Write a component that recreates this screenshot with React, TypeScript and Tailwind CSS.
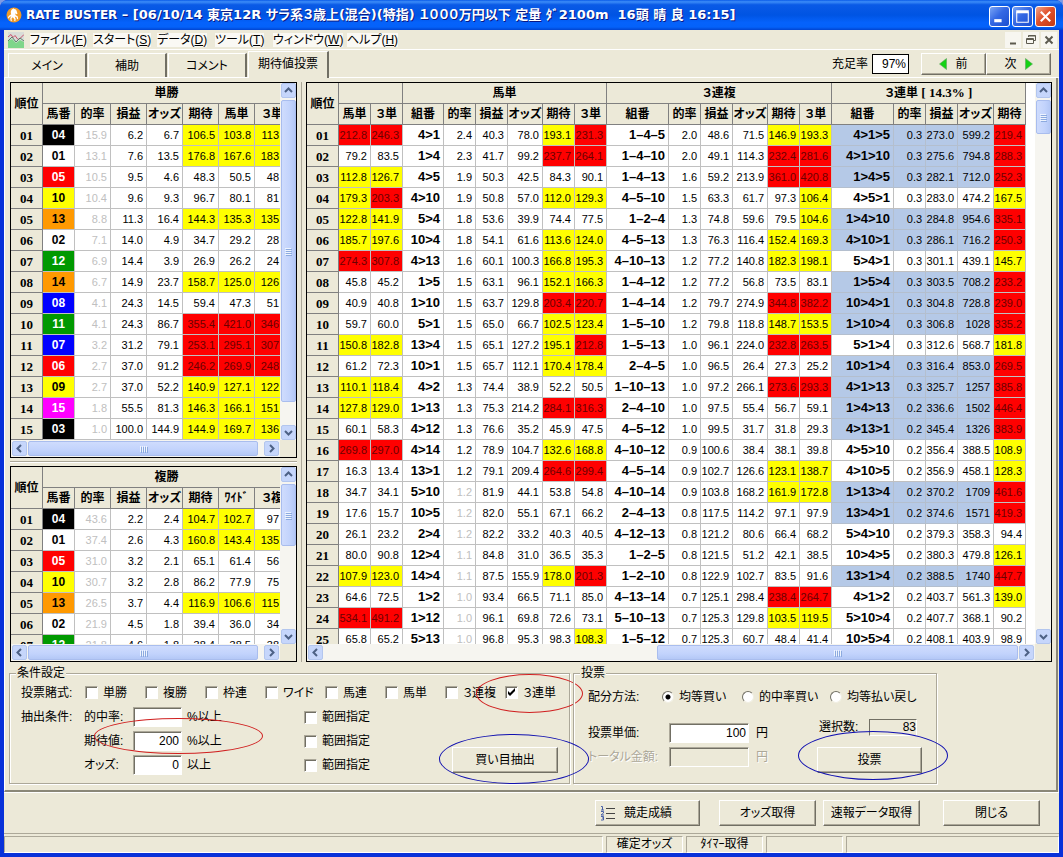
import clsx from 'clsx';
import type { ReactNode } from 'react';

const raised =
  'border border-t-white border-l-white border-b-[#716f64] border-r-[#716f64] bg-[#ece9d8] shadow-[inset_-1px_-1px_0_#aca899]';
const sunken =
  'border border-t-[#aca899] border-l-[#aca899] border-b-white border-r-white shadow-[inset_1px_1px_0_#716f64]';

const menus = [
  { label: 'ファイル', hotkey: 'F', width: 'w-[63px]' },
  { label: 'スタート', hotkey: 'S', width: 'w-[64px]' },
  { label: 'データ', hotkey: 'D', width: 'w-[58px]' },
  { label: 'ツール', hotkey: 'T', width: 'w-[58px]' },
  { label: 'ウィンドウ', hotkey: 'W', width: 'w-[74px]' },
  { label: 'ヘルプ', hotkey: 'H', width: 'w-[58px]' },
];

const betTypes = ['単勝', '複勝', '枠連', 'ワイド', '馬連', '馬単', '３連複', '３連単'];

const horseColors: Record<string, string> = {
  '03': 'bg-black text-white',
  '04': 'bg-black text-white',
  '05': 'bg-[#ff0000] text-white',
  '06': 'bg-[#ff0000] text-white',
  '07': 'bg-[#0000ff] text-white',
  '08': 'bg-[#0000ff] text-white',
  '09': 'bg-[#ffff00] text-black',
  '10': 'bg-[#ffff00] text-black',
  '11': 'bg-[#009900] text-white',
  '12': 'bg-[#009900] text-white',
  '13': 'bg-[#ff9900] text-black',
  '14': 'bg-[#ff9900] text-black',
  '15': 'bg-[#ff00ff] text-white',
};

const toRows = (text: string) =>
  text
    .trim()
    .split('\n')
    .map((line) => line.trim().split(/\s+/));

const winRows = toRows(`
  04 15.9 6.2 6.7 106.5 103.8 113
  01 13.1 7.6 13.5 176.8 167.6 183
  05 10.5 9.5 4.6 48.3 50.5 48
  10 10.4 9.6 9.3 96.7 80.1 81
  13 8.8 11.3 16.4 144.3 135.3 135
  02 7.1 14.0 4.9 34.7 29.2 28
  12 6.9 14.4 3.9 26.9 26.2 24
  14 6.7 14.9 23.7 158.7 125.0 126
  08 4.1 24.3 14.5 59.4 47.3 51
  11 4.1 24.3 86.7 355.4 421.0 346
  07 3.2 31.2 79.1 253.1 295.1 307
  06 2.7 37.0 91.2 246.2 269.9 248
  09 2.7 37.0 52.2 140.9 127.1 122
  15 1.8 55.5 81.3 146.3 166.1 151
  03 1.0 100.0 144.9 144.9 169.7 136
`);

const placeRows = toRows(`
  04 43.6 2.2 2.4 104.7 102.7 97
  01 37.4 2.6 4.3 160.8 143.4 135
  05 31.0 3.2 2.1 65.1 61.4 56
  10 30.7 3.2 2.8 86.2 77.9 75
  13 26.5 3.7 4.4 116.9 106.6 115
  02 21.9 4.5 1.8 39.4 36.0 34
  12 21.8 4.6 1.8 38.4 38.5 38
`);

// 馬単 3単 | 馬単: 組番 的率 損益 オッズ 期待 3単 | 3連複: 同 | 3連単: 組番 的率 損益 オッズ 期待
const comboRows = toRows(`
  212.8 246.3 4>1 2.4 40.3 78.0 193.1 231.3 1–4–5 2.0 48.6 71.5 146.9 193.3 4>1>5 0.3 273.0 599.2 219.4
  79.2 83.5 1>4 2.3 41.7 99.2 237.7 264.1 1–4–10 2.0 49.1 114.3 232.4 281.6 4>1>10 0.3 275.6 794.8 288.3
  112.8 126.7 4>5 1.9 50.3 42.5 84.3 90.1 1–4–13 1.6 59.2 213.9 361.0 420.8 1>4>5 0.3 282.1 712.0 252.3
  179.3 203.3 4>10 1.9 50.8 57.0 112.0 129.3 4–5–10 1.5 63.3 61.7 97.3 106.4 4>5>1 0.3 283.0 474.2 167.5
  122.8 141.9 5>4 1.8 53.6 39.9 74.4 77.5 1–2–4 1.3 74.8 59.6 79.5 104.6 1>4>10 0.3 284.8 954.6 335.1
  185.7 197.6 10>4 1.8 54.1 61.6 113.6 124.0 4–5–13 1.3 76.3 116.4 152.4 169.3 4>10>1 0.3 286.1 716.2 250.3
  274.3 307.8 4>13 1.6 60.1 100.3 166.8 195.3 4–10–13 1.2 77.2 140.8 182.3 198.1 5>4>1 0.3 301.1 439.1 145.7
  45.8 45.2 1>5 1.5 63.1 96.1 152.1 166.3 1–4–12 1.2 77.2 56.8 73.5 83.1 1>5>4 0.3 303.5 708.2 233.2
  40.9 40.8 1>10 1.5 63.7 129.8 203.4 220.7 1–4–14 1.2 79.7 274.9 344.8 382.2 10>4>1 0.3 304.8 728.8 239.0
  59.7 60.0 5>1 1.5 65.0 66.7 102.5 123.4 1–5–10 1.2 79.8 118.8 148.7 153.5 1>10>4 0.3 306.8 1028 335.2
  150.8 182.8 13>4 1.5 65.1 127.2 195.1 212.8 1–5–13 1.0 96.1 224.0 232.8 263.5 5>1>4 0.3 312.6 568.7 181.8
  61.2 72.3 10>1 1.5 65.7 112.1 170.4 178.4 2–4–5 1.0 96.5 26.4 27.3 25.2 10>1>4 0.3 316.4 853.0 269.5
  110.1 118.4 4>2 1.3 74.4 38.9 52.2 50.5 1–10–13 1.0 97.2 266.1 273.6 293.3 4>1>13 0.3 325.7 1257 385.8
  127.8 129.0 1>13 1.3 75.3 214.2 284.1 316.3 2–4–10 1.0 97.5 55.4 56.7 59.1 1>4>13 0.2 336.6 1502 446.4
  60.1 58.3 4>12 1.3 76.6 35.2 45.9 47.5 4–5–12 1.0 99.5 31.7 31.8 29.3 4>13>1 0.2 345.4 1326 383.9
  269.8 297.0 4>14 1.2 78.9 104.7 132.6 168.8 4–10–12 0.9 100.6 38.4 38.1 39.8 4>5>10 0.2 356.4 388.5 108.9
  16.3 13.4 13>1 1.2 79.1 209.4 264.6 299.4 4–5–14 0.9 102.7 126.6 123.1 138.7 4>10>5 0.2 356.9 458.1 128.3
  34.7 34.1 5>10 1.2 81.9 44.1 53.8 54.8 4–10–14 0.9 103.8 168.2 161.9 172.8 1>13>4 0.2 370.2 1709 461.6
  17.6 15.7 10>5 1.2 82.0 55.1 67.1 66.2 2–4–13 0.8 117.5 114.2 97.1 97.9 13>4>1 0.2 374.6 1571 419.3
  26.1 23.2 2>4 1.2 82.2 33.2 40.3 40.5 4–12–13 0.8 121.2 80.6 66.4 68.2 5>4>10 0.2 379.3 358.3 94.4
  80.0 90.8 12>4 1.1 84.8 31.0 36.5 35.3 1–2–5 0.8 121.5 51.2 42.1 38.5 10>4>5 0.2 380.3 479.8 126.1
  107.9 123.0 14>4 1.1 87.5 155.9 178.0 201.3 1–2–10 0.8 122.9 102.7 83.5 91.6 13>1>4 0.2 388.5 1740 447.7
  64.6 72.5 1>2 1.0 93.4 66.5 71.1 85.0 4–13–14 0.7 125.1 298.4 238.4 264.7 4>1>2 0.2 403.7 561.3 139.0
  534.1 491.2 1>12 1.0 96.1 69.8 72.6 73.1 5–10–13 0.7 125.3 129.8 103.5 119.5 5>10>4 0.2 407.7 368.1 90.2
  65.8 65.2 5>13 1.0 96.8 95.3 98.3 108.3 1–5–12 0.7 125.3 60.7 48.4 41.4 10>5>4 0.2 408.1 403.9 98.9
`);

const comboHeads = [
  '馬単', '３単',
  '組番', '的率', '損益', 'オッズ', '期待', '３単',
  '組番', '的率', '損益', 'オッズ', '期待', '３単',
  '組番', '的率', '損益', 'オッズ', '期待',
];
const comboWidths = [32, 32, 32, 41, 32, 32, 35, 32, 32, 62, 32, 32, 35, 32, 32, 62, 32, 32, 36, 32];
const pairColumns = [2, 8, 14];
const expectColumns = [0, 1, 6, 7, 12, 13, 18];

const rank = (index: number) => String(index + 1).padStart(2, '0');

function heat(value: string) {
  const n = Number(value);
  if (n >= 200) return 'bg-[#ff0000] text-[#6b0000]';
  if (n >= 100) return 'bg-[#ffff00]';
  return 'bg-white';
}

export default function App() {
  return (
    <div className="bg-[#7f9be4] font-['Liberation_Sans','Noto_Sans_CJK_JP',sans-serif] text-xs text-black [font-feature-settings:'palt']">
      <div className="flex min-h-screen flex-col overflow-hidden rounded-t-lg bg-[#0831d9]">
        <TitleBar />
        <div className="mx-1 mb-1 flex flex-1 flex-col bg-[#ece9d8]">
          <MenuBar />
          <TabBar />
          <main className="mr-px border-r-2 border-b-2 border-l border-r-[#8a8778] border-b-[#8a8778] border-l-white pb-1.5">
            <div className="flex pt-1 pr-1 pl-[5px]">
              <div className="w-[287px] shrink-0">
                <HorseTable title="単勝" heads={['期待', '馬単', '３単']} rows={winRows} viewport="h-[357px]" thumb="flex-1 mb-[21px]" />
                <div className="my-[3px] h-0.5 border-t border-t-[#aca899] border-b border-b-white" />
                <HorseTable title="複勝" heads={['期待', 'ﾜｲﾄﾞ', '３複']} rows={placeRows} viewport="h-[177px]" thumb="h-[62px]" />
              </div>
              <div className="mx-1 w-px border-l border-l-[#aca899] bg-white" />
              <ComboTable />
            </div>
            <div className="mt-1 flex gap-[3px] pl-1">
              <Conditions />
              <Voting />
            </div>
          </main>
          <ActionBar />
          <StatusBar />
        </div>
      </div>
    </div>
  );
}

function TitleBar() {
  return (
    <header className="flex h-[30px] items-center bg-[linear-gradient(180deg,#0a5be8_0%,#3c8cf8_6%,#0a5ae6_16%,#0054e3_50%,#0562fb_75%,#0462fa_90%,#0144d0_100%)] pr-[7px] pl-1.5">
      <svg className="h-4 w-4" viewBox="0 0 16 16">
        <circle cx="8" cy="8" r="7.5" fill="#f09a26" />
        <path
          d="M6.500 2l1-.8.6.8c1.600.2 2.600 1.200 2.800 2.800l.6 2-1 .5-1.200-1 .2 1.700 2.300 1.500.3 2.500-1 .2-.6-1.900-1.700-.8.9 2.500-.4 2.200-1-.2.1-1.800-1.600-2-1.300 1.300.3 2.500-1 .2-.6-3 1.200-2-1.900.8-.7 1.500-.9-.4.8-2.200 2.500-1.600c-.8-2-.6-4 1.300-5.300z"
          fill="#fff"
        />
      </svg>
      <h1 className="ml-1 flex-1 truncate font-['DejaVu_Sans','Noto_Sans_CJK_JP',sans-serif] text-[13px] leading-5 font-bold whitespace-pre text-white [text-shadow:1px_1px_0_#0a1883]">
        <span className="text-xs">RATE BUSTER</span>
        {' – [06/10/14 東京12R サラ系３歳上(混合)(特指) １０００万円以下 定量 ﾀﾞ2100m  16頭 晴 良 16:15]'}
      </h1>
      <div className="flex gap-0.5 pt-0.5">
        <WindowButton label="最小化">
          <path d="M5 14h7" stroke="#fff" strokeWidth="3" />
        </WindowButton>
        <WindowButton label="最大化">
          <path d="M4.500 6v9.500h11V6" fill="none" stroke="#fff" />
          <path d="M4 5.500h12" stroke="#fff" strokeWidth="3" />
        </WindowButton>
        <WindowButton label="閉じる" danger>
          <path d="M5.500 5.500l9 9M14.500 5.500l-9 9" stroke="#fff" strokeWidth="2" />
        </WindowButton>
      </div>
    </header>
  );
}

function WindowButton({ label, danger, children }: { label: string; danger?: boolean; children: ReactNode }) {
  return (
    <button
      aria-label={label}
      className={clsx(
        'h-[21px] w-[21px] rounded-[3px] border border-white',
        danger
          ? 'bg-[linear-gradient(135deg,#f0a58c,#e0512b_45%,#c23a12)]'
          : 'bg-[linear-gradient(135deg,#7aa5f5,#3468e4_45%,#1c4fd0)]'
      )}
    >
      <svg className="-m-px h-[21px] w-[21px]" viewBox="0 0 20 20">
        {children}
      </svg>
    </button>
  );
}

function MenuBar() {
  return (
    <nav className="flex h-5 items-center border-b border-b-white pl-1">
      <svg className="mr-1.5 h-4 w-4" viewBox="0 0 16 16">
        <path d="M0 0h16v16H0z" fill="#d9dcd8" />
        <path d="M0 9l4-2 4 4 4-3 4 2v6H0z" fill="#7fd68a" />
        <path d="M0 5l3-2.500 2 3 2-2 3 4 2-1 4-4" fill="none" stroke="#c8506a" />
        <path d="M0 9l4-4 4 5 4-4 4 3" fill="none" stroke="#5a7f6a" />
      </svg>
      {menus.map((menu) => (
        <button key={menu.hotkey} className={clsx('text-left leading-4 whitespace-nowrap', menu.width)}>
          <span className="bg-[#faf9f4]">
            {menu.label}(<u>{menu.hotkey}</u>)
          </span>
        </button>
      ))}
      <div className="ml-auto flex gap-0.5 pr-0.5">
        <MdiButton label="子ウィンドウを最小化">
          <path d="M5 11.500h6" stroke="#5c5a4f" strokeWidth="2" />
        </MdiButton>
        <MdiButton label="子ウィンドウを元に戻す">
          <path d="M5.500 5V3.500h7v5H11M3.500 6.500h7v5h-7zM3.500 7.500h7M5.500 4h7" fill="none" stroke="#5c5a4f" />
        </MdiButton>
        <MdiButton label="子ウィンドウを閉じる">
          <path d="M4.500 4.500l7 7M11.500 4.500l-7 7" stroke="#5c5a4f" strokeWidth="2" />
        </MdiButton>
      </div>
    </nav>
  );
}

function MdiButton({ label, children }: { label: string; children: ReactNode }) {
  return (
    <button aria-label={label} className="h-4 w-4 bg-[#f7f6f0]">
      <svg className="h-4 w-4" viewBox="0 0 16 16">
        {children}
      </svg>
    </button>
  );
}

function TabBar() {
  return (
    <div className="flex h-7 items-end border-b border-b-white pr-2 pl-1">
      <Tab>メイン</Tab>
      <Tab>補助</Tab>
      <Tab>コメント</Tab>
      <button className="-mb-px h-[27px] w-[81px] border-t border-r-2 border-l border-t-white border-r-[#716f64] border-l-white bg-[#ece9d8] pb-0.5 leading-5">
        期待値投票
      </button>
      <label className="mb-[3px] ml-auto flex h-5 items-center gap-1">
        充足率
        <input readOnly defaultValue="97%" className="h-5 w-[37px] border border-black bg-white pr-0.5 text-right" />
      </label>
      <button className={clsx('mb-0.5 ml-3 flex h-[22px] w-[65px] items-center justify-center gap-2', raised)}>
        <svg className="h-3 w-2" viewBox="0 0 8 12">
          <path d="M7.500.5v11L.5 6z" fill="#14d214" stroke="#5fa35f" strokeWidth=".6" />
        </svg>
        前
      </button>
      <button className={clsx('mb-0.5 flex h-[22px] w-[65px] items-center justify-center gap-2', raised)}>
        次
        <svg className="h-3 w-2" viewBox="0 0 8 12">
          <path d="M.5.5v11l7-5.500z" fill="#14d214" stroke="#5fa35f" strokeWidth=".6" />
        </svg>
      </button>
    </div>
  );
}

function Tab({ children }: { children: ReactNode }) {
  return (
    <button className="mr-px h-6 w-[79px] border-t border-r-2 border-l border-t-white border-r-[#716f64] border-l-white leading-5">
      {children}
    </button>
  );
}

function Chevron({ d, label }: { d: string; label: string }) {
  return (
    <button aria-label={label} className="h-[15px] w-[15px] shrink-0 rounded-xs border border-[#b3c6ee] bg-[#c6d6fb]">
      <svg className="-mt-px -ml-px h-[15px] w-[15px]" viewBox="0 0 15 15">
        <path d={d} fill="none" stroke="#4d6185" strokeWidth="2" />
      </svg>
    </button>
  );
}

function VScroll({ thumb }: { thumb: string }) {
  return (
    <div className="flex w-4 shrink-0 flex-col items-center bg-[#f6f5f0]">
      <Chevron label="上へ" d="M4 9l3.500-3.500L11 9" />
      <div className="flex flex-1 flex-col py-0.5">
        <div className={clsx('flex w-[15px] items-center justify-center rounded-xs border border-[#a9bdee] bg-[linear-gradient(90deg,#cfdcfd,#c2d3fc_60%,#b4c8f6)]', thumb)}>
          <div className="flex flex-col gap-px">
            {[0, 1, 2, 3].map((i) => (
              <i key={i} className="block h-px w-1.5 bg-[#eef4fe] shadow-[1px_1px_0_#8caadf]" />
            ))}
          </div>
        </div>
      </div>
      <Chevron label="下へ" d="M4 6l3.500 3.500L11 6" />
    </div>
  );
}

function HScroll({ thumb }: { thumb: string }) {
  return (
    <div className="flex h-[17px] bg-[#ece9d8]">
      <div className="flex flex-1 items-center bg-[#f6f5f0] px-px">
        <Chevron label="左へ" d="M9 4L5.500 7.500 9 11" />
        <div className="flex flex-1 px-px">
          <div className={clsx('flex h-[15px] items-center justify-center gap-px rounded-xs border border-[#a9bdee] bg-[linear-gradient(180deg,#cfdcfd,#c2d3fc_60%,#b4c8f6)]', thumb)}>
            {[0, 1, 2, 3].map((i) => (
              <i key={i} className="block h-1.5 w-px bg-[#eef4fe] shadow-[1px_1px_0_#8caadf]" />
            ))}
          </div>
        </div>
        <Chevron label="右へ" d="M6 4l3.500 3.500L6 11" />
      </div>
      <div className="w-4 shrink-0" />
    </div>
  );
}

function Head({ children, span, rows }: { children?: ReactNode; span?: number; rows?: number }) {
  return (
    <th
      colSpan={span}
      rowSpan={rows}
      className="h-[21px] border-r border-b border-[#808080] bg-[#ece9d8] p-0 text-center leading-5 font-bold whitespace-nowrap"
    >
      {children}
    </th>
  );
}

function RankCell({ index }: { index: number }) {
  return (
    <th className="h-[21px] border-r border-b border-[#808080] bg-[#ece9d8] p-0 pt-0.5 text-center font-['Liberation_Serif',serif] text-[13px] leading-[18px] font-bold">
      {rank(index)}
    </th>
  );
}

function Cell({ children, className }: { children: ReactNode; className?: string }) {
  return (
    <td className={clsx('h-[21px] border-r border-b p-0 text-right text-[11px] leading-5', className)}>
      {children}
    </td>
  );
}

type HorseTableProps = {
  title: string;
  heads: string[];
  rows: string[][];
  viewport: string;
  thumb: string;
};

function HorseTable({ title, heads, rows, viewport, thumb }: HorseTableProps) {
  return (
    <section className="border border-black">
      <div className={clsx('flex bg-white', viewport)}>
        <div className="min-w-0 flex-1 overflow-hidden">
          <table className="w-[280px] table-fixed border-separate border-spacing-0">
            <colgroup>
              <col className="w-8" />
              <col className="w-8" />
              <col span={6} className="w-9" />
            </colgroup>
            <thead>
              <tr>
                <Head rows={2}>順位</Head>
                <Head span={7}>{title}</Head>
              </tr>
              <tr>
                {['馬番', '的率', '損益', 'オッズ', ...heads].map((head) => (
                  <Head key={head}>{head}</Head>
                ))}
              </tr>
            </thead>
            <tbody>
              {rows.map(([horse, ...values], index) => (
                <tr key={horse}>
                  <RankCell index={index} />
                  <td
                    className={clsx(
                      'h-[21px] border-r border-b border-[#c0c0c0] p-0 text-center text-xs leading-5 font-bold',
                      horseColors[horse] ?? 'bg-white'
                    )}
                  >
                    {horse}
                  </td>
                  {values.map((value, i) => (
                    <Cell
                      key={i}
                      className={clsx(
                        'border-[#c0c0c0]',
                        i === 5 ? 'pr-[11px]' : 'pr-[3px]',
                        i === 0 && 'text-[#c0c0c0]',
                        i >= 3 && heat(value)
                      )}
                    >
                      {value}
                    </Cell>
                  ))}
                </tr>
              ))}
            </tbody>
          </table>
        </div>
        <VScroll thumb={thumb} />
      </div>
      <HScroll thumb="mr-[5px] flex-1" />
    </section>
  );
}

function ComboTable() {
  return (
    <section className="min-w-0 flex-1 border border-black">
      <div className="flex h-[561px] bg-white">
        <div className="min-w-0 flex-1 overflow-hidden">
          <table className="w-[719px] table-fixed border-separate border-spacing-0">
            <colgroup>
              {comboWidths.map((width, i) => (
                <col key={i} style={{ width }} />
              ))}
            </colgroup>
            <thead>
              <tr>
                <Head rows={2}>順位</Head>
                <Head span={2} />
                <Head span={6}>馬単</Head>
                <Head span={6}>３連複</Head>
                <Head span={5}>
                  ３連単 <span className="font-['Liberation_Serif',serif] text-[13px]">[ 14.3% ]</span>
                </Head>
              </tr>
              <tr>
                {comboHeads.map((head, i) => (
                  <Head key={i}>{head}</Head>
                ))}
              </tr>
            </thead>
            <tbody>
              {comboRows.map((row, index) => (
                <tr key={index}>
                  <RankCell index={index} />
                  {row.map((value, i) => (
                    <ComboCell key={i} value={value} column={i} faint={i === 3 && index > 16} picked={i > 13 && Number(row[18]) >= 200} />
                  ))}
                </tr>
              ))}
            </tbody>
          </table>
        </div>
        <VScroll thumb="h-[34px]" />
      </div>
      <HScroll thumb="ml-auto w-[361px]" />
    </section>
  );
}

type ComboCellProps = { value: string; column: number; faint: boolean; picked: boolean };

function ComboCell({ value, column, faint, picked }: ComboCellProps) {
  const tone = picked ? 'border-[#b4bfce] bg-[#b5c9e7]' : 'border-[#c0c0c0]';
  if (pairColumns.includes(column)) {
    return (
      <td className={clsx('h-[21px] border-r border-b p-0 pr-[3px] text-right text-[13px] leading-5 font-bold', tone)}>
        {value}
      </td>
    );
  }
  if (expectColumns.includes(column)) {
    return <Cell className={clsx('border-[#c0c0c0] pr-[3px]', heat(value))}>{value}</Cell>;
  }
  return <Cell className={clsx('pr-[3px]', faint && 'text-[#c0c0c0]', tone)}>{value}</Cell>;
}

type GroupBoxProps = { title: string; className: string; legend: string; children: ReactNode };

function GroupBox({ title, className, legend, children }: GroupBoxProps) {
  return (
    <fieldset className={clsx('relative h-[118px] shrink-0 border border-[#aca899] shadow-[1px_1px_0_#fff,inset_1px_1px_0_#fff]', className)}>
      <legend className={clsx('h-3.5 bg-[#ece9d8] px-px leading-3.5', legend)}>{title}</legend>
      {children}
    </fieldset>
  );
}

function CheckBox({ label, checked }: { label: string; checked?: boolean }) {
  return (
    <label className="flex w-[60px] items-center gap-[5px] whitespace-nowrap">
      <span className="grid">
        <input
          type="checkbox"
          defaultChecked={checked}
          className={clsx('peer col-start-1 row-start-1 h-[13px] w-[13px] appearance-none bg-white', sunken)}
        />
        <svg className="pointer-events-none col-start-1 row-start-1 hidden h-[13px] w-[13px] peer-checked:block" viewBox="0 0 13 13">
          <path d="M3 5v3l2 2 5-5V2L5 7z" fill="#000" />
        </svg>
      </span>
      {label}
    </label>
  );
}

function Ring({ className }: { className: string }) {
  return <div className={clsx('pointer-events-none absolute rounded-[50%] border', className)} />;
}

const limits = [
  { id: 'hit', label: '的中率:', value: '', unit: '%以上' },
  { id: 'expect', label: '期待値:', value: '200', unit: '%以上' },
  { id: 'odds', label: 'オッズ:', value: '0', unit: '以上' },
];

function Conditions() {
  return (
    <GroupBox title="条件設定" className="w-[561px] pl-[11px]" legend="-ml-[5px]">
      <div className="flex h-[25px] items-center">
        <span className="w-16">投票賭式:</span>
        {betTypes.map((type) => (
          <CheckBox key={type} label={type} checked={type === '３連単'} />
        ))}
      </div>
      <div className="flex">
        <span className="w-[63px] leading-6">抽出条件:</span>
        <div className="w-[368px]">
          {limits.map((limit) => (
            <div key={limit.id} className="flex h-6 items-center">
              <label htmlFor={limit.id} className="w-[49px]">
                {limit.label}
              </label>
              <input id={limit.id} defaultValue={limit.value} className={clsx('h-5 w-[49px] bg-white pr-0.5 text-right', sunken)} />
              <span className="w-[122px] pl-[5px]">{limit.unit}</span>
              <CheckBox label="範囲指定" />
            </div>
          ))}
        </div>
        <button className={clsx('mb-1 h-[26px] w-[106px] self-end', raised)}>買い目抽出</button>
      </div>
      <Ring className="top-[38px] left-[84px] h-9 w-[169px] border-[#d02020]" />
      <Ring className="-top-1.5 left-[466px] h-[39px] w-[107px] border-[#d02020]" />
      <Ring className="top-[54px] left-[429px] z-10 h-[50px] w-[150px] border-[#1010b0]" />
    </GroupBox>
  );
}

function Radio({ label, className, checked }: { label: string; className: string; checked?: boolean }) {
  return (
    <label className={clsx('flex items-center gap-[5px] whitespace-nowrap', className)}>
      <input
        type="radio"
        name="allocation"
        defaultChecked={checked}
        className="h-3 w-3 appearance-none rounded-full border border-t-[#716f64] border-r-[#f1efe2] border-b-[#f1efe2] border-l-[#716f64] bg-white checked:bg-[radial-gradient(circle,#000_2px,#fff_3px)]"
      />
      {label}
    </label>
  );
}

function Voting() {
  return (
    <GroupBox title="投票" className="w-[364px] pl-3.5" legend="-ml-2">
      <div className="flex h-[29px] items-center pt-1">
        <span className="w-[74px]">配分方法:</span>
        <Radio label="均等買い" className="w-20" checked />
        <Radio label="的中率買い" className="w-[88px]" />
        <Radio label="均等払い戻し" className="w-[88px]" />
      </div>
      <div className="flex pt-2">
        <div className="w-[229px] pt-1">
          <div className="flex h-6 items-center">
            <label htmlFor="stake" className="w-[81px]">
              投票単価:
            </label>
            <input id="stake" defaultValue="100" className={clsx('mr-[7px] h-5 w-20 bg-white pr-0.5 text-right', sunken)} />
            円
          </div>
          <div className="flex h-6 items-center text-[#aca899] [text-shadow:1px_1px_0_#fff]">
            <label htmlFor="total" className="w-[81px]">
              トータル金額:
            </label>
            <input id="total" disabled className={clsx('mr-[7px] h-5 w-20 bg-[#ece9d8]', sunken)} />
            円
          </div>
        </div>
        <div>
          <label className="flex h-5 items-center pl-0.5">
            <span className="w-[50px]">選択数:</span>
            <input readOnly defaultValue="83" className="h-[17px] w-12 border border-t-[#716f64] border-r-white border-b-white border-l-[#716f64] bg-[#ece9d8] text-right" />
          </label>
          <button className={clsx('mt-2.5 h-[26px] w-[105px]', raised)}>投票</button>
        </div>
      </div>
      <Ring className="top-[51px] left-[224px] h-[49px] w-[150px] border-[#1010b0]" />
    </GroupBox>
  );
}

function ActionBar() {
  return (
    <div className="flex flex-1 items-start justify-end border-t border-t-white pt-[7px] pr-[19px]">
      <button className={clsx('flex h-[26px] w-[105px] items-center pl-1', raised)}>
        <svg className="mr-2 h-4 w-4" viewBox="0 0 16 16">
          <path d="M6 3.500h9M6 8.500h9M6 13.500h9" stroke="#444" />
          <path d="M1 1.500h1.500v3.500M1 5h3M1 6.500h2.500v1.500L1 10h3M1 11.500h2.500v3.500H1M2 13h1.500" fill="none" stroke="#4a62a8" />
        </svg>
        競走成績
      </button>
      <button className={clsx('ml-[19px] h-[26px] w-[97px]', raised)}>オッズ取得</button>
      <button className={clsx('ml-[7px] h-[26px] w-[97px]', raised)}>速報データ取得</button>
      <button className={clsx('ml-[23px] h-[26px] w-[97px]', raised)}>閉じる</button>
    </div>
  );
}

function StatusBar() {
  const panel = 'h-[17px] border border-t-[#aca899] border-l-[#aca899] border-b-white border-r-white text-center leading-[15px]';
  return (
    <footer className="flex h-5 items-end gap-[3px] border-t border-t-[#aca899]">
      <div className={clsx('flex-1', panel)} />
      <div className={clsx('w-[77px]', panel)}>確定オッズ</div>
      <div className={clsx('w-[77px]', panel)}>ﾀｲﾏｰ取得</div>
      <div className={clsx('w-[77px]', panel)} />
      <div className={clsx('w-[213px]', panel)} />
    </footer>
  );
}
